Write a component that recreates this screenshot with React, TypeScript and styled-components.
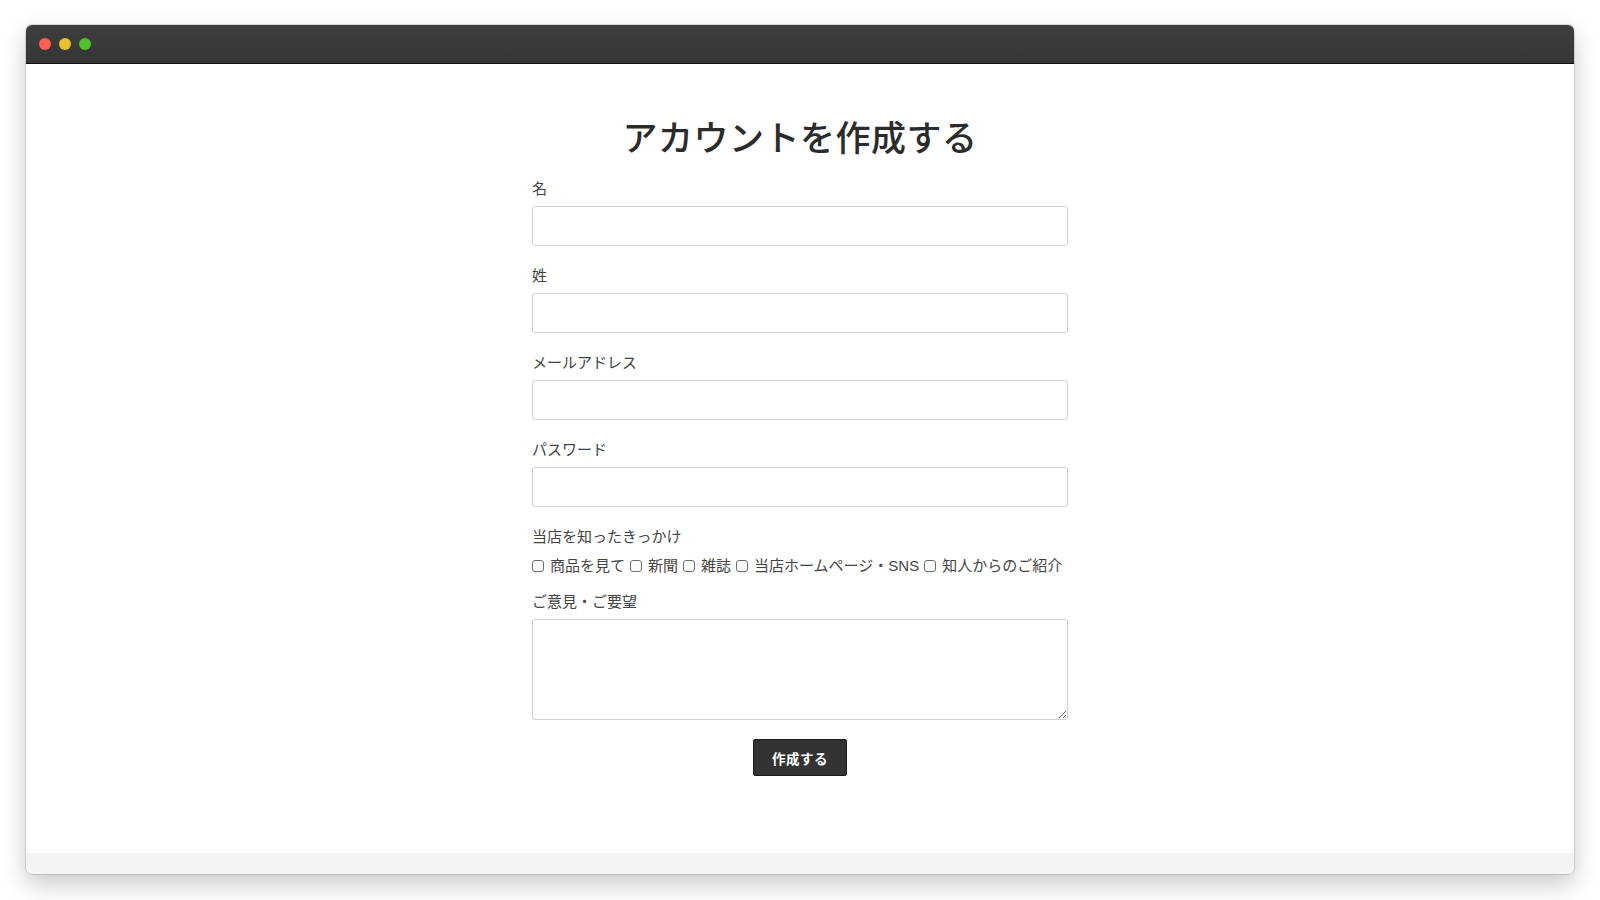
import styled, { createGlobalStyle } from "styled-components";

const GlobalStyle = createGlobalStyle`
    * {
        box-sizing: border-box;
    }
    body {
        margin: 0;
        background: #ffffff;
        font-family: "Liberation Sans", "Noto Sans CJK JP", sans-serif;
        color: #333333;
    }
`;

const Stage = styled.div`
    width: 1600px;
    height: 900px;
    padding: 25px 26px 26px;
    display: flex;
`;

const Window = styled.div`
    flex: 1;
    display: flex;
    flex-direction: column;
    border-radius: 6px;
    overflow: hidden;
    background: #ffffff;
    box-shadow: 0 0 0 1px rgba(0, 0, 0, 0.12), 0 10px 24px rgba(0, 0, 0, 0.22);
`;

const TitleBar = styled.div`
    height: 39px;
    flex-shrink: 0;
    display: flex;
    align-items: center;
    gap: 8px;
    padding: 0 0 0 13px;
    background: linear-gradient(#3d3d3d, #363636);
    border-bottom: 1px solid #111111;
`;

const Light = styled.span<{ $color: string }>`
    width: 12px;
    height: 12px;
    border-radius: 50%;
    background: ${props => props.$color};
`;

const Content = styled.main`
    flex: 1;
    display: flex;
    flex-direction: column;
    align-items: center;
    padding-top: 51px;
`;

const Heading = styled.h1`
    margin: 0 0 21px;
    font-family: "Noto Sans CJK JP", sans-serif;
    font-size: 35px;
    line-height: 42px;
    font-weight: 500;
    color: #2b2b2b;
    letter-spacing: 0.5px;
`;

const Form = styled.form`
    width: 536px;
    display: flex;
    flex-direction: column;
`;

const Field = styled.div`
    display: flex;
    flex-direction: column;
    margin-bottom: 19px;
`;

const Label = styled.label`
    font-size: 15px;
    line-height: 21px;
    color: #444444;
    margin-bottom: 7px;
`;

const TextInput = styled.input`
    height: 40px;
    width: 100%;
    border: 1px solid #d3d3d3;
    border-radius: 3px;
    padding: 0 10px;
    font-size: 15px;
    background: #ffffff;
    outline: none;
`;

const TextArea = styled.textarea`
    height: 101px;
    width: 100%;
    border: 1px solid #d3d3d3;
    border-radius: 3px;
    padding: 8px 10px;
    font-size: 15px;
    font-family: inherit;
    outline: none;
`;

const CheckRow = styled.div`
    display: flex;
    align-items: center;
    gap: 5px;
    height: 21px;
    margin-top: 1px;
    margin-bottom: -4px;
`;

const CheckItem = styled.label`
    display: inline-flex;
    align-items: center;
    gap: 6px;
    font-size: 15px;
    line-height: 21px;
    color: #444444;
    white-space: nowrap;
`;

const Check = styled.input`
    appearance: none;
    margin: 0;
    width: 12px;
    height: 12px;
    border: 1px solid #6b6b6b;
    border-radius: 3px;
    background: #ffffff;
`;

const ButtonRow = styled.div`
    display: flex;
    justify-content: center;
`;

const SubmitButton = styled.button`
    width: 94px;
    height: 37px;
    background: #333333;
    border: 1px solid #1c1c1c;
    border-radius: 2px;
    color: #ffffff;
    font-family: "Noto Sans CJK JP", sans-serif;
    font-size: 13.5px;
    font-weight: 700;
    letter-spacing: 0.5px;
`;

const Footer = styled.div`
    height: 21px;
    flex-shrink: 0;
    background: #f4f4f4;
`;

const sources = ["商品を見て", "新聞", "雑誌", "当店ホームページ・SNS", "知人からのご紹介"];

const App = () => {
    return (
        <>
            <GlobalStyle />
            <Stage>
                <Window>
                    <TitleBar>
                        <Light $color="#fe5f57" />
                        <Light $color="#e8bf2c" />
                        <Light $color="#52c32c" />
                    </TitleBar>
                    <Content>
                        <Heading>アカウントを作成する</Heading>
                        <Form onSubmit={e => e.preventDefault()}>
                            <Field>
                                <Label>名</Label>
                                <TextInput type="text" />
                            </Field>
                            <Field>
                                <Label>姓</Label>
                                <TextInput type="text" />
                            </Field>
                            <Field>
                                <Label>メールアドレス</Label>
                                <TextInput type="email" />
                            </Field>
                            <Field>
                                <Label>パスワード</Label>
                                <TextInput type="password" />
                            </Field>
                            <Field>
                                <Label>当店を知ったきっかけ</Label>
                                <CheckRow>
                                    {sources.map(s => (
                                        <CheckItem key={s}>
                                            <Check type="checkbox" />
                                            {s}
                                        </CheckItem>
                                    ))}
                                </CheckRow>
                            </Field>
                            <Field>
                                <Label>ご意見・ご要望</Label>
                                <TextArea />
                            </Field>
                            <ButtonRow>
                                <SubmitButton type="submit">作成する</SubmitButton>
                            </ButtonRow>
                        </Form>
                    </Content>
                    <Footer />
                </Window>
            </Stage>
        </>
    );
};

export default App;
